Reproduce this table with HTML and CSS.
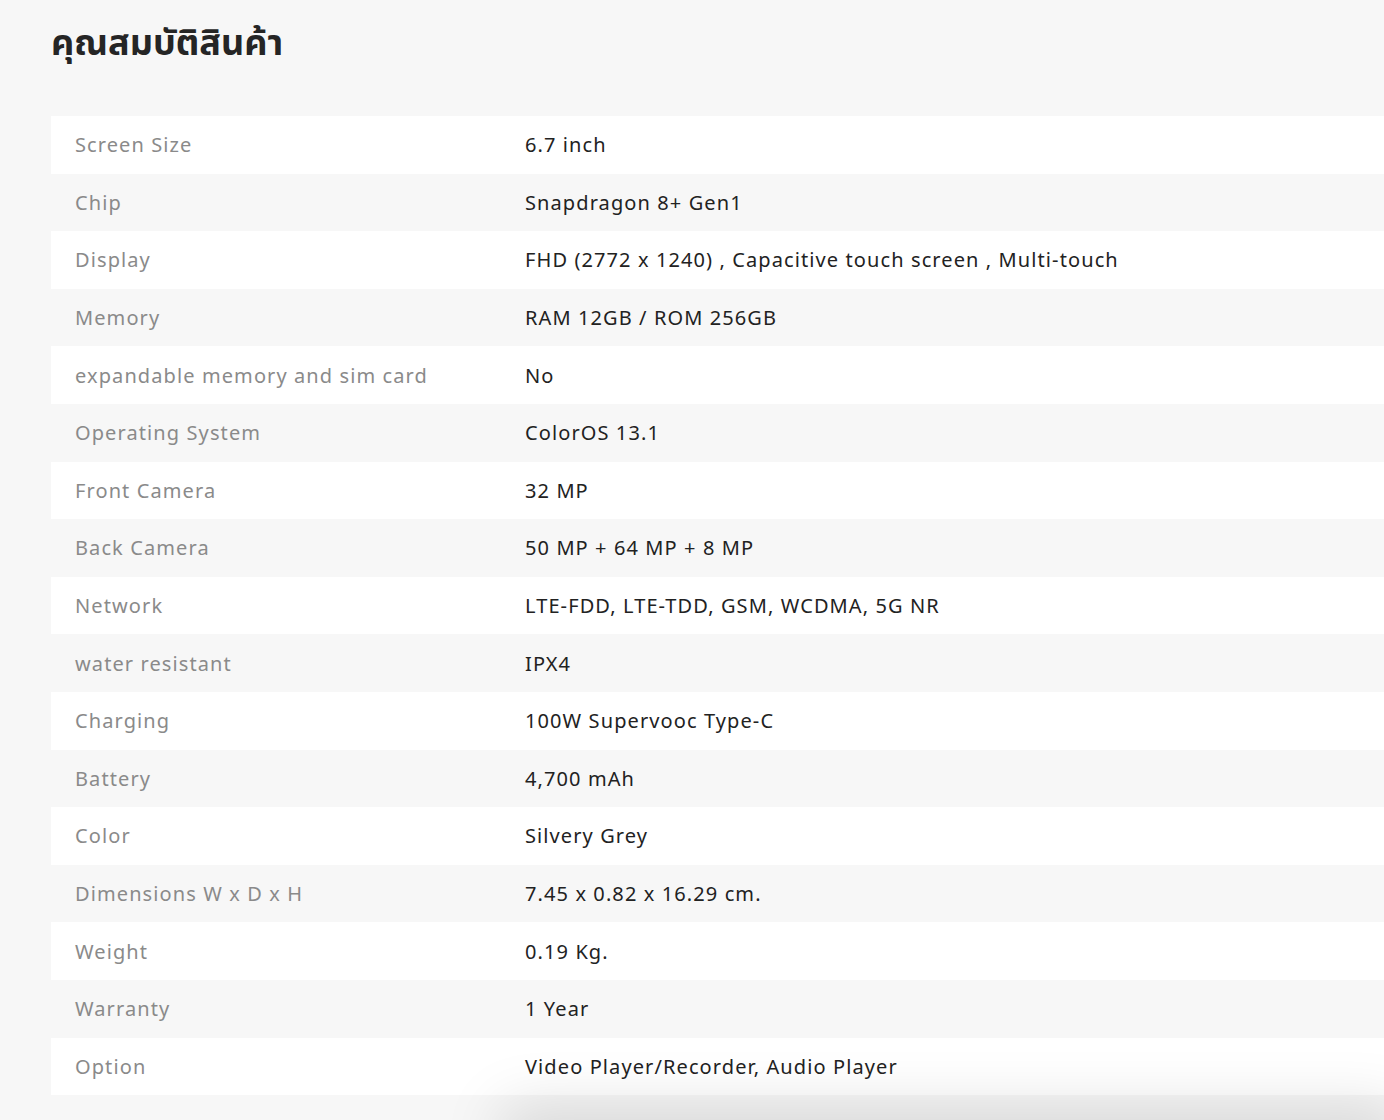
FILE: index.html
```html
<!DOCTYPE html>
<html lang="th">
<head>
<meta charset="utf-8">
<title>คุณสมบัติสินค้า</title>
<link rel="stylesheet" href="styles.css">
</head>
<body>
<section class="specs">
  <h2 class="specs-title">คุณสมบัติสินค้า</h2>
  <table class="spec-table">
    <tbody>
      <tr><td class="label">Screen Size</td><td class="value">6.7 inch</td></tr>
      <tr><td class="label">Chip</td><td class="value">Snapdragon 8+ Gen1</td></tr>
      <tr><td class="label">Display</td><td class="value">FHD (2772 x 1240) , Capacitive touch screen , Multi-touch</td></tr>
      <tr><td class="label">Memory</td><td class="value">RAM 12GB / ROM 256GB</td></tr>
      <tr><td class="label">expandable memory and sim card</td><td class="value">No</td></tr>
      <tr><td class="label">Operating System</td><td class="value">ColorOS 13.1</td></tr>
      <tr><td class="label">Front Camera</td><td class="value">32 MP</td></tr>
      <tr><td class="label">Back Camera</td><td class="value">50 MP + 64 MP + 8 MP</td></tr>
      <tr><td class="label">Network</td><td class="value">LTE-FDD, LTE-TDD, GSM, WCDMA, 5G NR</td></tr>
      <tr><td class="label">water resistant</td><td class="value">IPX4</td></tr>
      <tr><td class="label">Charging</td><td class="value">100W Supervooc Type-C</td></tr>
      <tr><td class="label">Battery</td><td class="value">4,700 mAh</td></tr>
      <tr><td class="label">Color</td><td class="value">Silvery Grey</td></tr>
      <tr><td class="label">Dimensions W x D x H</td><td class="value">7.45 x 0.82 x 16.29 cm.</td></tr>
      <tr><td class="label">Weight</td><td class="value">0.19 Kg.</td></tr>
      <tr><td class="label">Warranty</td><td class="value">1 Year</td></tr>
      <tr><td class="label">Option</td><td class="value">Video Player/Recorder, Audio Player</td></tr>
    </tbody>
  </table>
</section>
<div class="bottom-shadow"></div>
</body>
</html>
```
FILE: styles.css
```css
html, body {
  margin: 0;
  padding: 0;
  background: #f7f7f7;
}
body {
  font-family: "Noto Sans", "Noto Sans Thai", sans-serif;
  overflow: hidden;
  height: 1120px;
  position: relative;
}
.specs {
  padding: 14px 0 0 51px;
}
.specs-title {
  margin: 0 0 46px 0;
  font-size: 36px;
  line-height: 56px;
  font-weight: 700;
  color: #252525;
}
.spec-table {
  width: 100%;
  border-collapse: collapse;
  font-size: 20px;
  letter-spacing: 1.1px;
}
.spec-table tr:nth-child(odd) {
  background: #ffffff;
}
.spec-table tr:nth-child(even) {
  background: #f7f7f7;
}
.spec-table td {
  height: 57.6px;
  padding: 0 24px;
  vertical-align: middle;
  box-sizing: border-box;
}
.label {
  width: 450px;
  color: #8a8a8a;
}
.value {
  color: #222;
}
.bottom-shadow {
  position: absolute;
  left: 520px;
  right: 0;
  bottom: -44px;
  height: 40px;
  background: #fff;
  box-shadow: 0 0 60px 18px rgba(0, 0, 0, 0.13);
  pointer-events: none;
}
```
